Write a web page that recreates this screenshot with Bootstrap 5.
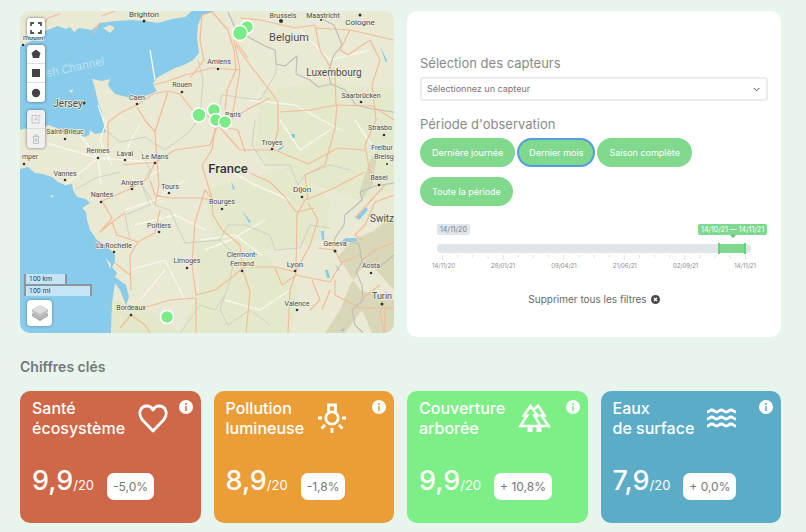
<!DOCTYPE html>
<html lang="fr">
<head>
<meta charset="utf-8">
<meta name="viewport" content="width=device-width, initial-scale=1">
<title>Observation</title>
<link rel="stylesheet" href="https://cdn.jsdelivr.net/npm/bootstrap@5.3.0/dist/css/bootstrap.min.css">
<style>
  body { background: #e7f5ec; font-family: Inter, "Open Sans", sans-serif; color: #777; }
  .page { padding: 11px 25px 8px 20px; }
  .tiles { --bs-gutter-x: 13px; --bs-gutter-y: 13px; }
  .map-box { border-radius: 10px; }
  .map-box > svg { font-family: Roboto, sans-serif; }
  .map-tools { top: 7px; left: 7px; gap: 8px; }
  .map-foot { bottom: 7px; left: 4px; gap: 4px; }
  .tool-group { background: #fff; border-radius: 3px; box-shadow: 0 0 3px rgba(0,0,0,.55); width: 18px; }
  .tool-group button { background: none; border: 0; border-bottom: 1px solid #ddd; height: 19px; padding: 0; display: flex; align-items: center; justify-content: center; }
  .tool-group button:last-child { border-bottom: 0; }
  .tool-off { background: #f1f1f1; }
  .layer-btn { background: #fff; border: 0; border-radius: 4px; box-shadow: 0 0 3px rgba(0,0,0,.4); width: 25px; height: 26px; margin-left: 3px; padding: 0; display: flex; align-items: center; justify-content: center; }
  .scale-bar { border: 2px solid #8b979c; border-top: 0; background: rgba(255,255,255,.5); color: #444; font: 7px/10px Roboto, sans-serif; padding-left: 3px; }
  .scale-km { width: 43px; border-bottom: 0; }
  .scale-mi { width: 68px; border-top: 2px solid #8b979c; border-bottom: 0; }
  .panel { background: #fff; border-radius: 10px; padding: 43px 13px 31px; }
  .panel-label { font-size: 13px; line-height: 18px; color: #8a8a8a; }
  .sensor { height: 24px; border: 2px solid #ececec; border-radius: 3px; font-size: 9px; line-height: 12px; color: #777; padding: 2px 22px 2px 5px; margin: 5px 0 14px; background-size: 7px 7px; background-position: right 6px center; }
  .periods { column-gap: 2px; row-gap: 10px; margin-top: 5px; }
  .btn-period { background: #80d98d; color: #fff; font-size: 9px; line-height: 13px; border: 2px solid #80d98d; border-radius: 15px; padding: 6px 10px; }
  .btn-period:hover { background: #6fcd7e; color: #fff; }
  .btn-period.chosen { border-color: #539fdf; }
  .range-box { margin: 18px 17px 0; }
  .range-tags { height: 20px; }
  .tag { font-size: 7px; line-height: 11px; border-radius: 2px; padding: 0 3px; }
  .tag-min { background: #dfe5e8; color: #7b868b; }
  .tag-now { background: #80d98d; color: #fff; margin-right: -16px; position: relative; }
  .tag-now::after { content: ""; position: absolute; left: 50%; top: 100%; border: 3px solid transparent; border-top-color: #65bd77; border-bottom: 0; margin-left: -3px; }
  .track { height: 9px; background: #e1e5e9; border-radius: 4px; }
  .track-fill { top: 0; bottom: 0; background: #80d98d; }
  .track input { position: absolute; inset: -1px 0; width: 100%; height: 11px; margin: 0; background: none; appearance: none; -webkit-appearance: none; pointer-events: none; }
  .track input::-webkit-slider-thumb { -webkit-appearance: none; width: 2px; height: 11px; background: #63d376; pointer-events: auto; }
  .ticks { margin: 2px 5px 0; }
  .dates { margin: 1px -5px 0; font-size: 6px; line-height: 9px; color: #8b8b8b; }
  .clear-btn { font-size: 10px; line-height: 14px; color: #6a6a6a; margin-top: 22px; padding: 0; border: 0; background: none; }
  .section-title { font-size: 14px; line-height: 20px; font-weight: 600; color: #777; margin: 20px 0 14px; }
  .key-card { border-radius: 10px; color: #fff; padding: 7px 12px 21px; }
  .key-title { font-size: 16px; line-height: 20px; font-weight: 500; margin: 0; }
  .key-head { gap: 13px; }
  .key-info { top: 9px; right: 8px; padding: 0; border: 0; background: none; display: flex; }
  .key-row { margin-top: 26px; gap: 13px; }
  .key-num { font-size: 27px; line-height: 33px; font-weight: 500; }
  .key-num small { font-size: 13px; font-weight: 400; }
  .key-delta { background: #fff; color: #777; border-radius: 7px; font-size: 12px; line-height: 17px; padding: 5px 6px; margin-top: 6px; }
  .red { background: #cf6848; } .orange { background: #eb9e38; } .green { background: #7def86; } .blue { background: #5cacc7; }
</style>
</head>
<body>
<main class="page">
  <div class="row tiles align-items-start">
    <section class="col-6">
      <div class="map-box position-relative overflow-hidden">
        <svg class="d-block w-100" viewBox="20 11 374 322" role="img" aria-label="Carte de France">
          <rect x="20" y="11" width="374" height="322" fill="#eae9d3"/>
          <g fill="#e2e8c9">
            <path d="M262 90L330 82 394 90V190L360 200 300 180 255 150Z" opacity=".7"/>
            <path d="M205 190L280 170 330 200 325 240 270 250 215 250Z" opacity=".7"/>
            <path d="M195 240L260 250 300 290 290 333H180L200 290Z" opacity=".7"/>
            <path d="M112 300L150 310 180 333H112Z"/>
          </g>
          <g fill="#d0d0ae" opacity=".7">
            <path d="M338 257L352 240 372 232 394 215V290L378 272 366 262 350 285 340 310 325 333H345L362 310 372 333H394V300L360 290Z"/>
            <path d="M360 190L370 160 378 150 372 185 362 200Z"/>
          </g>
          <g fill="#89cbea">
            <path d="M20 47L33 40 45 31 58 26 66 29 70 27 74 32 79 28 92 30 100 23 115 21 132 20 145 21 158 23 172 19 185 17 192 11H215L202 15 198 25 197 38 199 53 193 60 184 65 175 68 158 77 153 83 155 88 157 91 148 95 137 98 127 97 115 94 110 88 108 85 110 79 102 81 92 79 95 88 98 102 102 112 103 122 106 132 95 134 90 130 89 135 85 137 72 133 65 135 57 128 48 125 42 129 35 126 20 130Z"/>
            <path d="M20 169L28 167 35 173 43 174 52 177 58 182 65 185 72 184 73 190 77 197 86 199 90 203 82 208 86 212 87 220 90 230 97 240 107 246 115 255 115 262 112 267 117 273 115 277 126 285 129 297 126 305 120 290 115 283 112 303 111 333H20Z"/>
            <path d="M355 217L366 207 368 210 359 220ZM336 245L346 238 356 238 357 241 346 242ZM278 149L284 145 283 148 279 151ZM291 134h4v4h-4ZM325 270h3l2 8h-3ZM335 264l5 6-2 1ZM340 331l5-4-1 4ZM380 46l7 14-1 3ZM242 210l9 12-2 1ZM231 181l4 8-2 1ZM321 231h3v9h-2Z"/>
          </g>
          <g fill="#eae9d3"><path d="M103 28L110 25 115 28 110 33ZM69 91l4-2-1 4ZM106 258l5 6-1 5ZM50 195l4 1-2 2Z"/></g>
          <g fill="none" stroke="#f8f6ea" stroke-width="1.4">
            <path d="M47 143L70 150 98 158 124 160 155 162M98 158L80 135M98 158L101 185M65 185L98 158M124 160L130 142 140 125M98 105L104 122M112 165L100 140 107 120M125 210L155 200 185 180M135 225L175 215 205 230M130 270L165 260 185 300M200 240L235 235 262 255M265 220L230 240 205 250M280 120L300 150 330 130M250 100L295 105 340 130M220 165L255 185 290 200M150 50L155 80M300 30L330 60 370 50M355 120L375 150M160 170L135 185M140 300L165 270M225 300L260 310 290 290"/>
          </g>
          <g fill="none" stroke="#bdbcb8" stroke-width="1.1" stroke-linejoin="round">
            <path d="M228 12L236 30 252 39 265 46 275 50 276 64 285 66 292 60 297 56 296 74 310 80 318 87 331 84 345 90 356 105 372 109 394 112M331 84L328 72 334 55 342 45 334 25 320 18M394 183L375 186 360 192 362 200 345 215 344 225 335 238 333 247 347 241 359 244 362 262 356 272 362 285 363 300 352 310 355 325 363 333M362 262L378 268 394 255"/>
            <path d="M108 132L120 142 145 137 165 150 188 133 200 118 203 80 198 60M203 110L215 125 222 95 260 100 275 75 277 63M140 150L150 170 142 185 155 205 170 210 185 243 220 240 228 225 245 225 270 235 275 250 300 248 310 225 330 228M142 185L150 205 125 215 130 240M220 240L235 255 230 280 220 310 228 325 250 310 270 325M255 120L252 145 265 165 290 165 298 185 305 175 330 165 350 170M180 333L200 305 215 310 225 295M75 190L95 178 120 172" stroke-width=".7" opacity=".8"/>
          </g>
          <g fill="none" stroke="#f4bb98" stroke-width="1.2" stroke-linejoin="round">
            <path d="M108 150V122L122 112 137 105 153 94 168 91 180 94 194 112 215 118M153 85L165 82 185 75 212 68 240 70M202 15L200 40 204 60 190 78M202 15L212 12 228 30 234 50 236 70 227 90 225 110M234 40L240 70 232 118M236 45L250 65 268 88 278 102 278 130 273 150M248 58L236 42M230 120L250 108 270 98M280 112L310 110 336 105 372 106 394 120M336 105L335 75 320 50 315 25 295 28 260 20 240 18M337 105L335 128 325 165 305 175 308 200M315 28L350 30 394 40M350 30L340 50 348 55 370 40M370 40L380 60 372 85 376 120 365 145 372 185M215 122L240 150 275 150 308 164 338 148 365 150M245 152L238 130 218 126M218 125L210 145 175 150 156 162 123 165M215 128L212 150 202 165 211 195 213 215 222 230 240 245 243 270 250 292 246 333M168 92L162 110 155 132 157 160 159 185 155 205M137 107L145 120 155 132M155 162L148 178 132 188 102 201 112 218 100 232 112 222 125 213M112 222L117 235 138 242 155 233 160 210M150 180L155 195 170 198 200 198 213 200M213 200L205 190 195 222 192 265 196 295 215 290 235 275 243 267 275 267 296 272 297 215 305 200 330 190 365 172M138 242L130 255 131 290M131 309L150 306 170 300 196 298 196 333M131 315L145 325 150 333M131 315L120 328M115 263L130 275M250 173L270 182 285 197 296 212 315 208M308 203L318 220 310 245 297 270 290 290 288 333M318 248L335 250 342 265M275 268L282 285 296 275M296 275L330 282 342 262 360 255M312 280L320 300 310 310M335 280L335 295 360 308M358 308L394 308M360 300L380 285M362 240L355 235 365 225 375 202 394 195M355 218L385 185M362 260L375 250 394 242M330 290L322 310M385 308V333M380 310L384 333M40 30L48 18 60 14M102 16L115 11M93 34L100 22"/>
          </g>
          <g fill="#333">
            <circle cx="144" cy="21" r="1.5"/><circle cx="84" cy="103" r="1.5"/><circle cx="137" cy="104" r="1.3"/><circle cx="182" cy="92" r="1.3"/><circle cx="65" cy="139" r="1.3"/><circle cx="98" cy="158" r="1.3"/><circle cx="125" cy="160" r="1.3"/><circle cx="155" cy="163" r="1.3"/><circle cx="24" cy="164" r="1.3"/><circle cx="65" cy="180" r="1.3"/><circle cx="132" cy="189" r="1.3"/><circle cx="169" cy="193" r="1.3"/><circle cx="101" cy="202" r="1.3"/><circle cx="159" cy="232" r="1.3"/><circle cx="114" cy="252" r="1.3"/><circle cx="187" cy="268" r="1.3"/><circle cx="131" cy="315" r="1.3"/><circle cx="218" cy="69" r="1.3"/><circle cx="281" cy="21" r="2"/><circle cx="321" cy="20" r="1"/><circle cx="360" cy="15" r="1.5"/><circle cx="361" cy="102" r="1.3"/><circle cx="384" cy="135" r="1.3"/><circle cx="387" cy="164" r="1"/><circle cx="272" cy="149" r="1.3"/><circle cx="302" cy="197" r="1.3"/><circle cx="222" cy="209" r="1.3"/><circle cx="242" cy="271" r="1.3"/><circle cx="295" cy="271" r="1.3"/><circle cx="297" cy="310" r="1.3"/><circle cx="335" cy="251" r="1.5"/><circle cx="371" cy="273" r="1.3"/><circle cx="382" cy="304" r="1.5"/><circle cx="379" cy="185" r="1.3"/><circle cx="23" cy="45" r="1.3"/>
          </g>
          <text transform="rotate(-12 48 77)" x="47" y="77" font-size="12" fill="#b9e0f3">sh Channel</text>
          <g font-size="7" fill="#4b4b48" stroke="#f1f0e2" stroke-width="1.4" paint-order="stroke" text-anchor="middle">
            <text x="144" y="17" font-size="8">Brighton</text><text x="137" y="100">Caen</text><text x="182" y="87">Rouen</text><text x="65" y="134">Saint-Brieuc</text><text x="98" y="153">Rennes</text><text x="125" y="156">Laval</text><text x="155" y="159">Le Mans</text><text x="30" y="159">mper</text><text x="65" y="176">Vannes</text><text x="132" y="185">Angers</text><text x="170" y="189">Tours</text><text x="102" y="197">Nantes</text><text x="159" y="228">Poitiers</text><text x="114" y="248">La Rochelle</text><text x="187" y="263">Limoges</text><text x="131" y="310">Bordeaux</text><text x="219" y="64">Amiens</text><text x="283" y="18">Brussels</text><text x="323" y="18">Maastricht</text><text x="360" y="25" font-size="8">Cologne</text><text x="361" y="98">Saarbrücken</text><text x="380" y="130">Strasbo</text><text x="382" y="150">Freibur</text><text x="384" y="159">Breisg</text><text x="272" y="145">Troyes</text><text x="302" y="192" font-size="8">Dijon</text><text x="222" y="204">Bourges</text><text x="242" y="257">Clermont-</text><text x="242" y="266">Ferrand</text><text x="295" y="267" font-size="8">Lyon</text><text x="297" y="306">Valence</text><text x="335" y="246">Geneva</text><text x="371" y="268">Aosta</text><text x="379" y="180">Basel</text><text x="233" y="117">Paris</text><text x="33" y="40">mouth</text>
            <text x="68" y="107" font-size="10">Jersey</text><text x="289" y="41" font-size="11">Belgium</text><text x="334" y="76" font-size="10">Luxembourg</text><text x="382" y="222" font-size="10">Switz</text><text x="382" y="299" font-size="9">Turin</text>
            <text x="228" y="173" font-size="13" font-weight="500" fill="#333">France</text>
          </g>
          <g fill="#7aec85" stroke="#fff" stroke-width="1.5">
            <circle cx="247" cy="27" r="6.5"/><circle cx="240" cy="33" r="7.5"/><circle cx="199" cy="115" r="7"/><circle cx="214" cy="110" r="6.5"/><circle cx="216" cy="120" r="6.5"/><circle cx="225" cy="122" r="6.5"/><circle cx="167" cy="317" r="6.5"/>
          </g>
        </svg>
        <div class="map-tools position-absolute d-flex flex-column">
          <div class="tool-group d-flex flex-column"><button aria-label="Plein écran"><svg width="12" height="12" viewBox="0 0 12 12" fill="none" stroke="#555" stroke-width="1.8"><path d="M1 4V1h3M8 1h3v3M11 8v3H8M4 11H1V8"/></svg></button></div>
          <div class="tool-group d-flex flex-column">
            <button aria-label="Polygone"><svg width="10" height="10" viewBox="0 0 10 10" fill="#444"><path d="M5 .5L9.500 4 8 9H2L.5 4Z"/></svg></button>
            <button aria-label="Rectangle"><svg width="10" height="10" viewBox="0 0 10 10" fill="#444"><path d="M1 1h8v8H1Z"/></svg></button>
            <button aria-label="Cercle"><svg width="10" height="10" viewBox="0 0 10 10" fill="#444"><circle cx="5" cy="5" r="4.200"/></svg></button>
          </div>
          <div class="tool-group tool-off d-flex flex-column">
            <button disabled aria-label="Modifier"><svg width="10" height="10" viewBox="0 0 10 10" fill="none" stroke="#c4c4c4"><path d="M6 1.500H1v7.500h7V5M4 6l.5-2L8 .8 9.300 2 6 5.500Z"/></svg></button>
            <button disabled aria-label="Supprimer"><svg width="10" height="10" viewBox="0 0 10 10" fill="none" stroke="#c4c4c4"><path d="M1.500 2.500h7M3.500 2.500V1h3v1.500M2.500 3v6.500h5V3M4.200 4v4M5.800 4v4"/></svg></button>
          </div>
        </div>
        <div class="map-foot position-absolute d-flex flex-column">
          <div><div class="scale-bar scale-km">100 km</div><div class="scale-bar scale-mi">100 mi</div></div>
          <button class="layer-btn" aria-label="Couches"><svg width="18" height="18" viewBox="0 0 18 18"><path d="M9 8L17 12 9 17 1 12Z" fill="#999"/><path d="M9 5L17 9.500V12L9 16 1 12V9.500Z" fill="#b5b5b5"/><path d="M9 1L17 5.500V8L9 12.500 1 8V5.500Z" fill="#c4c4c4"/><path d="M9 1L17 5.500 9 10 1 5.500Z" fill="#dedede"/></svg></button>
        </div>
      </div>
    </section>
    <section class="col-6">
      <form class="panel" onsubmit="return false">
        <label class="panel-label d-block" for="sensor">Sélection des capteurs</label>
        <select class="form-select sensor" id="sensor"><option>Sélectionnez un capteur</option></select>
        <div class="panel-label">Période d'observation</div>
        <div class="periods d-flex flex-wrap">
          <button type="button" class="btn btn-period">Dernière journée</button>
          <button type="button" class="btn btn-period chosen">Dernier mois</button>
          <button type="button" class="btn btn-period">Saison complète</button>
          <button type="button" class="btn btn-period">Toute la période</button>
        </div>
        <div class="range-box">
          <div class="range-tags d-flex justify-content-between align-items-start">
            <span class="tag tag-min">14/11/20</span><span class="tag tag-now">14/10/21 — 14/11/21</span>
          </div>
          <div class="track position-relative">
            <div class="track-fill position-absolute" style="left:90%;width:8.4%"></div>
            <input type="range" aria-label="Date de début" min="0" max="1000" value="900">
            <input type="range" aria-label="Date de fin" min="0" max="1000" value="984">
          </div>
          <div class="ticks"><svg class="d-block w-100" height="5" viewBox="0 0 301 5" preserveAspectRatio="none"><path d="M.5 0v5M60.500 0v5M120.500 0v5M180.500 0v5M240.500 0v5M300.500 0v5M15.500 0v3M30.500 0v3M45.500 0v3M75.500 0v3M90.500 0v3M105.500 0v3M135.500 0v3M150.500 0v3M165.500 0v3M195.500 0v3M210.500 0v3M225.500 0v3M255.500 0v3M270.500 0v3M285.500 0v3" stroke="#e4e4e4"/></svg></div>
          <div class="dates d-flex justify-content-between"><span>14/11/20</span><span>28/01/21</span><span>09/04/21</span><span>21/06/21</span><span>02/09/21</span><span>14/11/21</span></div>
        </div>
        <button type="button" class="clear-btn d-flex align-items-center gap-1 mx-auto">Supprimer tous les filtres <svg width="9" height="9" viewBox="0 0 9 9"><circle cx="4.500" cy="4.500" r="4.500" fill="#4a4a4a"/><path d="M3 3l3 3M6 3l-3 3" stroke="#fff" stroke-width="1.300"/></svg></button>
      </form>
    </section>
  </div>
  <h2 class="section-title">Chiffres clés</h2>
  <div class="row tiles">
    <div class="col-3"><article class="key-card red position-relative">
      <div class="key-head d-flex align-items-center"><h3 class="key-title">Santé<br>écosystème</h3>
        <svg width="30" height="30" viewBox="0 0 30 30" fill="none" stroke="#fff" stroke-width="2.800" stroke-linejoin="round"><path d="M15 28L4.500 17C-.5 11 2 3 9 3c3 0 5 2 6 4 1-2 3-4 6-4 7 0 9.500 8 4.500 14Z"/></svg></div>
      <button class="key-info position-absolute" aria-label="Informations"><svg width="14" height="14" viewBox="0 0 14 14"><circle cx="7" cy="7" r="7" fill="#fff"/><path d="M7 3v2M7 6v5" stroke="#cf6848" stroke-width="1.500"/></svg></button>
      <div class="key-row d-flex align-items-center"><span class="key-num">9,9<small>/20</small></span><span class="key-delta">-5,0%</span></div>
    </article></div>
    <div class="col-3"><article class="key-card orange position-relative">
      <div class="key-head d-flex align-items-center"><h3 class="key-title">Pollution<br>lumineuse</h3>
        <svg width="30" height="30" viewBox="0 0 30 30" fill="none" stroke="#fff" stroke-width="2.800"><circle cx="15" cy="15" r="6.200"/><path d="M11.500 10V2h7v8M1 15h4M25 15h4M15 25v5M8 22l-3.500 3.500M22 22l3.500 3.500"/></svg></div>
      <button class="key-info position-absolute" aria-label="Informations"><svg width="14" height="14" viewBox="0 0 14 14"><circle cx="7" cy="7" r="7" fill="#fff"/><path d="M7 3v2M7 6v5" stroke="#eb9e38" stroke-width="1.500"/></svg></button>
      <div class="key-row d-flex align-items-center"><span class="key-num">8,9<small>/20</small></span><span class="key-delta">-1,8%</span></div>
    </article></div>
    <div class="col-3"><article class="key-card green position-relative">
      <div class="key-head d-flex align-items-center"><h3 class="key-title">Couverture<br>arborée</h3>
        <svg width="33" height="30" viewBox="0 0 33 30" fill="none" stroke="#fff" stroke-width="2.600"><path d="M12.500 3L6 12.500h3L2.500 23H22.500L16.500 12.500h3ZM15.500 7L20 2.500 26.500 12.500h-3L30.500 23H22"/><path d="M9.500 23h5v6h-5ZM18.500 23h5v6h-5Z" fill="#fff" stroke="none"/></svg></div>
      <button class="key-info position-absolute" aria-label="Informations"><svg width="14" height="14" viewBox="0 0 14 14"><circle cx="7" cy="7" r="7" fill="#fff"/><path d="M7 3v2M7 6v5" stroke="#7def86" stroke-width="1.500"/></svg></button>
      <div class="key-row d-flex align-items-center"><span class="key-num">9,9<small>/20</small></span><span class="key-delta">+ 10,8%</span></div>
    </article></div>
    <div class="col-3"><article class="key-card blue position-relative">
      <div class="key-head d-flex align-items-center"><h3 class="key-title">Eaux<br>de surface</h3>
        <svg width="29" height="22" viewBox="0 0 29 22" fill="none" stroke="#fff" stroke-width="2.800"><path id="wave" d="M0 5c2.400 0 2.400-2 4.800-2s2.400 2 4.800 2 2.400-2 4.800-2 2.400 2 4.800 2 2.400-2 4.800-2 2.400 2 5 2"/><use href="#wave" y="7"/><use href="#wave" y="14"/></svg></div>
      <button class="key-info position-absolute" aria-label="Informations"><svg width="14" height="14" viewBox="0 0 14 14"><circle cx="7" cy="7" r="7" fill="#fff"/><path d="M7 3v2M7 6v5" stroke="#5cacc7" stroke-width="1.500"/></svg></button>
      <div class="key-row d-flex align-items-center"><span class="key-num">7,9<small>/20</small></span><span class="key-delta">+ 0,0%</span></div>
    </article></div>
  </div>
</main>
<script src="https://cdn.jsdelivr.net/npm/bootstrap@5.3.0/dist/js/bootstrap.bundle.min.js"></script>
</body>
</html>
